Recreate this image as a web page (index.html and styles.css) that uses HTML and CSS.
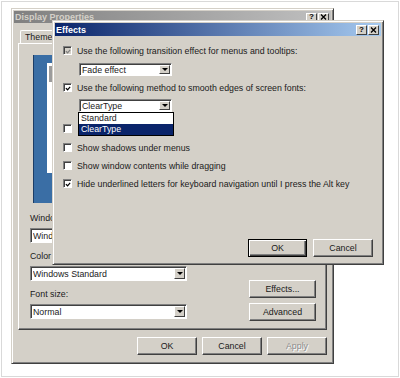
FILE: index.html
```html
<!DOCTYPE html>
<html>
<head>
<meta charset="utf-8">
<title>Effects</title>
<link rel="stylesheet" href="styles.css">
</head>
<body>
<div class="frame">
  <div class="win dp">
    <div class="titlebar inactive">
      <span class="title">Display Properties</span>
      <div class="tbtns">
        <span class="tbtn">?</span>
        <span class="tbtn"><svg width="7" height="6" viewBox="0 0 7 6"><path d="M1 0.5 L6 5.5 M6 0.5 L1 5.5" stroke="#000" stroke-width="1.3" fill="none"/></svg></span>
      </div>
    </div>
    <div class="dp-body">
      <div class="tabs"><span class="tab">Themes</span></div>
      <div class="panel">
        <div class="preview"><div class="pv-win"><div class="pv-bar"></div></div></div>
        <div class="fields">
          <div class="fcol">
            <div class="lbl">Windows and buttons:</div>
            <div class="combo big"><span class="val">Windows Classic style</span><span class="dd"><i></i></span></div>
            <div class="lbl gap">Color scheme:</div>
            <div class="combo big"><span class="val">Windows Standard</span><span class="dd"><i></i></span></div>
            <div class="lbl gap">Font size:</div>
            <div class="combo big"><span class="val">Normal</span><span class="dd"><i></i></span></div>
          </div>
          <div class="bcol">
            <button class="btn side">Effects...</button>
            <button class="btn side">Advanced</button>
          </div>
        </div>
      </div>
      <div class="actions">
        <button class="btn act">OK</button>
        <button class="btn act">Cancel</button>
        <button class="btn act disabled">Apply</button>
      </div>
    </div>
  </div>

  <div class="win fx">
    <div class="titlebar active">
      <span class="title">Effects</span>
      <div class="tbtns">
        <span class="tbtn">?</span>
        <span class="tbtn"><svg width="7" height="6" viewBox="0 0 7 6"><path d="M1 0.5 L6 5.5 M6 0.5 L1 5.5" stroke="#000" stroke-width="1.3" fill="none"/></svg></span>
      </div>
    </div>
    <div class="fx-body">
      <div class="row r1"><span class="cb off"><svg width="7" height="7" viewBox="0 0 7 7"><path d="M1 3 L3 5 L6 1.5" stroke="#808080" stroke-width="1.4" fill="none"/></svg></span><span>Use the following transition effect for menus and tooltips:</span></div>
      <div class="combo small c1"><span class="val">Fade effect</span><span class="dd"><i></i></span></div>
      <div class="row r2"><span class="cb"><svg width="7" height="7" viewBox="0 0 7 7"><path d="M1 3 L3 5 L6 1.5" stroke="#000" stroke-width="1.4" fill="none"/></svg></span><span>Use the following method to smooth edges of screen fonts:</span></div>
      <div class="combo small c2"><span class="val">ClearType</span><span class="dd"><i></i></span>
        <ul class="list">
          <li>Standard</li>
          <li class="sel">ClearType</li>
        </ul>
      </div>
      <div class="row r3"><span class="cb"></span></div>
      <div class="row r4"><span class="cb"></span><span>Show shadows under menus</span></div>
      <div class="row r5"><span class="cb"></span><span>Show window contents while dragging</span></div>
      <div class="row r5"><span class="cb"><svg width="7" height="7" viewBox="0 0 7 7"><path d="M1 3 L3 5 L6 1.5" stroke="#000" stroke-width="1.4" fill="none"/></svg></span><span>Hide underlined letters for keyboard navigation until I press the Alt key</span></div>
      <div class="fx-actions">
        <button class="btn fxb default">OK</button>
        <button class="btn fxb">Cancel</button>
      </div>
    </div>
  </div>
</div>
</body>
</html>
```

FILE: styles.css
```css
* { box-sizing: border-box; }
html, body { margin: 0; padding: 0; background: #fff; }
body {
  font-family: "Liberation Sans", Arial, sans-serif;
  font-size: 8.8px;
  color: #1a1a1a;
  width: 400px;
  height: 378px;
  overflow: hidden;
}
.frame {
  position: relative;
  margin: 1px;
  width: 398px;
  height: 376px;
  border: 1px solid #d9d9d9;
  background: #fff;
}

/* classic window */
.win {
  position: absolute;
  background: #d4d0c8;
  border: 1px solid;
  border-color: #d4d0c8 #404040 #404040 #d4d0c8;
  box-shadow: inset 1px 1px #fff, inset -1px -1px #808080;
  padding: 2px;
  display: flex;
  flex-direction: column;
}
.dp { left: 9px; top: 6px; width: 323px; height: 356px; }
.fx { left: 50px; top: 18px; width: 332px; height: 245px; z-index: 2; }

.titlebar {
  display: flex;
  align-items: center;
  justify-content: space-between;
  padding: 0 2px 0 1px;
  font-weight: bold;
  font-size: 9px;
  flex: none;
}
.inactive { height: 12px; background: linear-gradient(to right, #808080, #c0c0c0); color: #d4d0c8; }
.active { height: 13px; background: linear-gradient(to right, #0a246a, #a6caf0); color: #fff; }
.tbtns { display: flex; gap: 1px; }
.tbtn {
  width: 11px;
  height: 9px;
  background: #d4d0c8;
  border: 1px solid;
  border-color: #fff #404040 #404040 #fff;
  display: flex;
  align-items: center;
  justify-content: center;
  color: #000;
  font-size: 8px;
  font-weight: bold;
  line-height: 1;
}
.active .tbtn { height: 10px; }

/* display properties body */
.dp-body { flex: 1; display: flex; flex-direction: column; padding: 7px 4px 0 4px; }
.tabs { display: flex; padding-left: 2px; height: 13px; }
.tab {
  width: 44px;
  height: 13px;
  border: 1px solid;
  border-bottom: none;
  border-color: #fff #404040 transparent #fff;
  border-radius: 2px 2px 0 0;
  padding-left: 4px;
  line-height: 12px;
}
.panel {
  height: 287px;
  border: 1px solid;
  border-color: #fff #404040 #404040 #fff;
  box-shadow: inset -1px -1px #808080;
  padding: 11px 10px 0 11px;
}
.preview {
  margin-left: 3px;
  width: 279px;
  height: 148px;
  background: #3a6ea5;
  border-left: 1px solid #1c3d66;
  padding: 8px 0 0 13px;
}
.pv-win { width: 200px; height: 110px; background: #fff; padding: 3px 0 0 2px; }
.pv-bar { width: 6px; height: 16px; background: #9c9c9c; }
.fields { display: flex; justify-content: space-between; margin-top: 10px; }
.fcol { width: 157px; display: flex; flex-direction: column; }
.lbl { height: 11px; line-height: 11px; }
.lbl.gap { margin-top: 8px; }
.bcol { display: flex; flex-direction: column; gap: 5px; padding-top: 67px; }

.combo {
  position: relative;
  background: #fff;
  border: 1px solid;
  border-color: #808080 #fff #fff #808080;
  box-shadow: inset 1px 1px #404040;
  display: flex;
  align-items: center;
  padding: 1px 1px 1px 2px;
}
.combo .val { flex: 1; white-space: nowrap; overflow: hidden; }
.combo .dd {
  width: 11px;
  align-self: stretch;
  background: #d4d0c8;
  border: 1px solid;
  border-color: #fff #404040 #404040 #fff;
  display: flex;
  align-items: center;
  justify-content: center;
}
.combo .dd i {
  display: block;
  width: 0;
  height: 0;
  border-left: 3px solid transparent;
  border-right: 3px solid transparent;
  border-top: 3px solid #000;
}
.combo.big { height: 15px; margin-top: 4px; }
.combo.small { height: 13px; width: 93px; margin-left: 16px; }

.btn {
  font: inherit;
  color: #1a1a1a;
  background: #d4d0c8;
  border: 1px solid;
  border-color: #fff #404040 #404040 #fff;
  box-shadow: inset -1px -1px #808080;
  padding: 0;
  display: flex;
  align-items: center;
  justify-content: center;
}
.btn.side { width: 67px; height: 18px; }
.actions { display: flex; justify-content: flex-end; gap: 5px; margin-top: 7px; }
.btn.act { width: 60px; height: 18px; }
.btn.disabled { color: #8c8c8c; text-shadow: 1px 1px #fff; }

/* effects body */
.fx-body { flex: 1; display: flex; flex-direction: column; padding: 9px 8px 5px 8px; }
.row { display: flex; align-items: center; height: 11px; gap: 5px; white-space: nowrap; }
.cb {
  flex: none;
  width: 9px;
  height: 9px;
  background: #fff;
  border: 1px solid;
  border-color: #808080 #fff #fff #808080;
  box-shadow: inset 1px 1px #404040;
  display: flex;
  align-items: center;
  justify-content: center;
}
.cb.off { background: #d4d0c8; }
.cb svg { margin: 1px 0 0 1px; }
.c1 { margin-top: 7px; }
.r2 { margin-top: 6px; }
.c2 { margin-top: 6px; }
.r3 { margin-top: 11px; }
.r4 { margin-top: 8px; }
.r5 { margin-top: 7px; }

.list {
  position: absolute;
  top: calc(100% + 1px);
  left: -2px;
  width: 96px;
  margin: 0;
  padding: 0;
  list-style: none;
  background: #fff;
  border: 1px solid #000;
  z-index: 3;
}
.list li { height: 11px; line-height: 11px; padding-left: 2px; }
.list li.sel { background: #0a246a; color: #fff; }

.fx-actions { margin-top: auto; display: flex; justify-content: flex-end; gap: 6px; }
.btn.fxb { width: 60px; height: 18px; }
.btn.default {
  width: 59px;
  border-color: #000;
  box-shadow: inset 1px 1px #fff, inset -1px -1px #404040, inset -2px -2px #808080;
}
```
